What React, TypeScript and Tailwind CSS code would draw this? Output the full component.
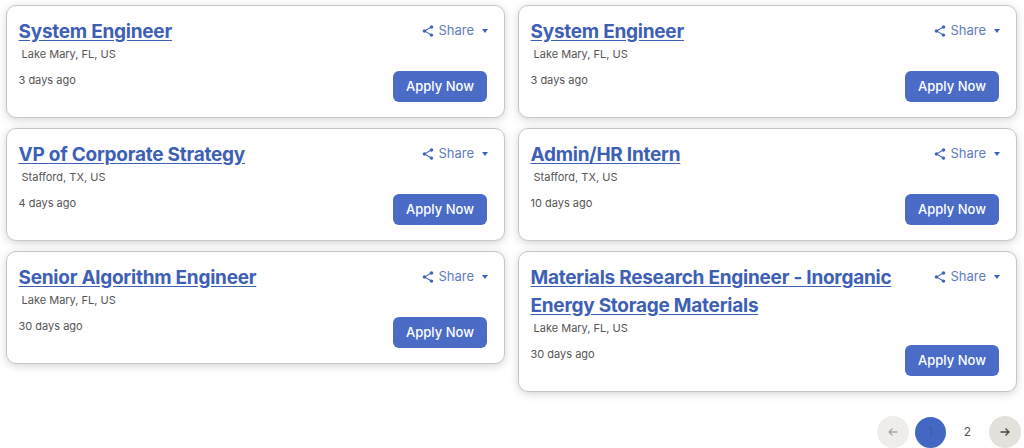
import React from "react";

const jobs = [
  { t: "System Engineer", l: "Lake Mary, FL, US", d: "3 days ago" },
  { t: "System Engineer", l: "Lake Mary, FL, US", d: "3 days ago" },
  { t: "VP of Corporate Strategy", l: "Stafford, TX, US", d: "4 days ago" },
  { t: "Admin/HR Intern", l: "Stafford, TX, US", d: "10 days ago" },
  { t: "Senior Algorithm Engineer", l: "Lake Mary, FL, US", d: "30 days ago" },
  { t: "Materials Research Engineer - Inorganic Energy Storage Materials", l: "Lake Mary, FL, US", d: "30 days ago" },
];

function ShareIcon() {
  return (
    <svg width="14" height="14" viewBox="0 0 24 24" fill="#3f63b8">
      <path d="M18 16.08c-.76 0-1.44.3-1.96.77L8.91 12.7c.05-.23.09-.46.09-.7s-.04-.47-.09-.7l7.05-4.11c.54.5 1.25.81 2.04.81 1.66 0 3-1.34 3-3s-1.34-3-3-3-3 1.34-3 3c0 .24.04.47.09.7L8.04 9.81C7.5 9.31 6.79 9 6 9c-1.66 0-3 1.34-3 3s1.34 3 3 3c.79 0 1.5-.31 2.04-.81l7.12 4.16c-.05.21-.08.43-.08.65 0 1.61 1.31 2.92 2.92 2.92s2.92-1.31 2.92-2.92-1.31-2.92-2.92-2.92z" />
    </svg>
  );
}

function Card({ t, l, d }: { t: string; l: string; d: string }) {
  return (
    <div className="bg-white border border-[#c9c6c2] rounded-[10px] shadow-[0_2px_9px_rgba(0,0,0,0.17)] pl-[11.5px] pr-4 pt-[10px] pb-[15px]">
      <div className="flex items-start justify-between">
        <a className="block w-[385px] text-[19px] leading-[28px] font-bold tracking-[-0.25px] text-[#3d5fb5] underline underline-offset-2 pt-[2px]">
          {t}
        </a>
        <div className="flex items-center text-[13px] text-[#5f7cc4] pt-[5px]">
          <ShareIcon />
          <span className="ml-[3px]">Share</span>
          <span className="ml-[8px] w-0 h-0 border-x-[3.5px] border-x-transparent border-t-[4px] border-t-[#3f63b8]" />
        </div>
      </div>
      <div className="ml-[3px] text-[11px] leading-[16px] text-[#555]">{l}</div>
      <div className="flex items-start justify-between">
        <div className="mt-[10px] text-[11px] leading-[16px] text-[#555]">{d}</div>
        <button className="mt-[9px] mr-[1px] w-[94px] h-[31px] rounded-[6px] bg-[#4a6cc7] text-white text-[13px] font-medium">
          Apply Now
        </button>
      </div>
    </div>
  );
}

function Arrow({ left, color }: { left?: boolean; color: string }) {
  return (
    <svg width="12" height="12" viewBox="0 0 24 24" fill="none" stroke={color} strokeWidth="2.6">
      {left ? <path d="M21 12H4M11 5l-7 7 7 7" /> : <path d="M3 12h17M13 5l7 7-7 7" />}
    </svg>
  );
}

export default function App() {
  return (
    <div className="w-[1024px] h-[448px] overflow-hidden bg-white" style={{ fontFamily: "Inter, 'Open Sans', sans-serif" }}>
      <div className="grid grid-cols-[499px_499px] gap-x-[13px] gap-y-[10px] items-start pl-[6px] pt-[5px]">
        {jobs.map((j, i) => (
          <Card key={i} {...j} />
        ))}
      </div>
      <div className="flex items-center justify-end gap-[6px] pr-[3px] mt-[24px]">
        <div className="w-[32px] h-[32px] rounded-full bg-[#efedea] flex items-center justify-center"><Arrow left color="#a8a6a3" /></div>
        <div className="w-[31px] h-[31px] rounded-full bg-[#4268c4] flex items-center justify-center text-[12px] text-[#3d5fa8]">1</div>
        <div className="w-[31px] h-[32px] rounded-full flex items-center justify-center text-[12px] text-[#555]">2</div>
        <div className="w-[32px] h-[32px] rounded-full bg-[#e4e1dd] flex items-center justify-center"><Arrow color="#4a4443" /></div>
      </div>
    </div>
  );
}
